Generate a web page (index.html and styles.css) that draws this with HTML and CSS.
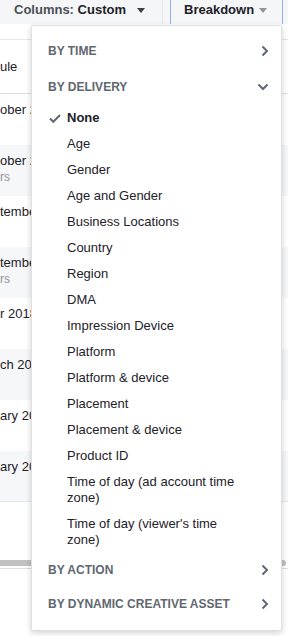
FILE: index.html
```html
<!DOCTYPE html>
<html lang="en">
<head>
    <meta charset="UTF-8">
    <meta name="viewport" content="width=device-width, initial-scale=1.0">
    <title>Breakdown</title>
    <link rel="stylesheet" href="styles.css">
</head>
<body>
    <!-- Barra de herramientas -->
    <div class="toolbar">
        <div class="tb-btn tb-columns">
            <span class="tb-label">Columns:</span>&nbsp;<span class="tb-value">Custom</span>
            <span class="caret"></span>
        </div>
        <div class="tb-sep"></div>
        <div class="tb-btn tb-breakdown">
            <span class="tb-value">Breakdown</span>
            <span class="caret caret-light"></span>
        </div>
    </div>

    <!-- Tabla de anuncios (detrás del menú) -->
    <div class="grid">
        <div class="grid-head">ule</div>
        <div class="grid-row">ober 2018</div>
        <div class="grid-row alt">ober 2018<span class="sub">rs</span></div>
        <div class="grid-row">tember 2018</div>
        <div class="grid-row alt">tember 2018<span class="sub">rs</span></div>
        <div class="grid-row">r 2018</div>
        <div class="grid-row alt">ch 2018</div>
        <div class="grid-row">ary 2018</div>
        <div class="grid-row alt">ary 2018</div>
    </div>
    <div class="scroll"><div class="scroll-thumb"></div></div>

    <!-- Menú desplegable -->
    <div class="menu">
        <div class="menu-head">
            <span>By time</span>
            <svg class="chev" width="8" height="12" viewBox="0 0 8 12"><polyline points="1.5,1.5 6,6 1.5,10.5"/></svg>
        </div>
        <div class="menu-head">
            <span>By delivery</span>
            <svg class="chev" width="12" height="8" viewBox="0 0 12 8"><polyline points="1.5,1.5 6,6 10.5,1.5"/></svg>
        </div>
        <div class="menu-item selected">
            <span class="mark"><svg width="12" height="9" viewBox="0 0 12 9"><polyline points="1,4.5 4.3,7.8 11,1"/></svg></span>
            <span>None</span>
        </div>
        <div class="menu-item"><span class="mark"></span><span>Age</span></div>
        <div class="menu-item"><span class="mark"></span><span>Gender</span></div>
        <div class="menu-item"><span class="mark"></span><span>Age and Gender</span></div>
        <div class="menu-item"><span class="mark"></span><span>Business Locations</span></div>
        <div class="menu-item"><span class="mark"></span><span>Country</span></div>
        <div class="menu-item"><span class="mark"></span><span>Region</span></div>
        <div class="menu-item"><span class="mark"></span><span>DMA</span></div>
        <div class="menu-item"><span class="mark"></span><span>Impression Device</span></div>
        <div class="menu-item"><span class="mark"></span><span>Platform</span></div>
        <div class="menu-item"><span class="mark"></span><span>Platform &amp; device</span></div>
        <div class="menu-item"><span class="mark"></span><span>Placement</span></div>
        <div class="menu-item"><span class="mark"></span><span>Placement &amp; device</span></div>
        <div class="menu-item"><span class="mark"></span><span>Product ID</span></div>
        <div class="menu-item"><span class="mark"></span><span>Time of day (ad account time zone)</span></div>
        <div class="menu-item"><span class="mark"></span><span>Time of day (viewer's time zone)</span></div>
        <div class="menu-head compact">
            <span>By action</span>
            <svg class="chev" width="8" height="12" viewBox="0 0 8 12"><polyline points="1.5,1.5 6,6 1.5,10.5"/></svg>
        </div>
        <div class="menu-head compact">
            <span>By dynamic creative asset</span>
            <svg class="chev" width="8" height="12" viewBox="0 0 8 12"><polyline points="1.5,1.5 6,6 1.5,10.5"/></svg>
        </div>
    </div>
</body>
</html>
```

FILE: styles.css
```css
body {
    font-family: "Liberation Sans", Arial, sans-serif;
    margin: 0;
    width: 288px;
    height: 636px;
    overflow: hidden;
    position: relative;
    background-color: #fff;
    color: #1d2129;
}

/* Barra superior */
.toolbar {
    display: flex;
    height: 24px;
    background-color: #f5f6f7;
    font-size: 13px;
    font-weight: bold;
    line-height: 20px;
}

.tb-btn {
    display: flex;
    align-items: flex-start;
    box-sizing: border-box;
    height: 24px;
}

.tb-columns {
    padding-left: 14px;
    width: 162px;
}

.tb-label {
    color: #4b4f56;
}

.tb-value {
    color: #1d2129;
}

.tb-sep {
    width: 1px;
    height: 24px;
    background-color: #e4e6eb;
}

.tb-breakdown {
    width: 113px;
    margin-left: 7px;
    padding-left: 13px;
    border-left: 1px solid #8db2ef;
    border-right: 1px solid #8db2ef;
}

.caret {
    width: 0;
    height: 0;
    margin: 8px 0 0 11px;
    border-left: 4.5px solid transparent;
    border-right: 4.5px solid transparent;
    border-top: 5px solid #3b3f45;
}

.caret-light {
    margin-left: 5px;
    border-left-width: 4px;
    border-right-width: 4px;
    border-top-color: #90949c;
}

/* Tabla */
.grid {
    margin-top: 15px;
    border-top: 1px solid #e4e6eb;
    font-size: 13px;
    line-height: 16px;
}

.grid-head {
    height: 53px;
    display: flex;
    align-items: center;
    border-bottom: 1px solid #dddfe2;
    white-space: nowrap;
}

.grid-row {
    height: 51px;
    box-sizing: border-box;
    padding-top: 8px;
    white-space: nowrap;
}

.grid-row.alt {
    background-color: #f6f7f9;
}

.grid-row:last-child {
    border-bottom: 1px solid #e4e6eb;
}

.sub {
    display: block;
    font-size: 12px;
    color: #90949c;
}

.scroll {
    margin-top: 58px;
    height: 8px;
    border-bottom: 1px solid #dddfe2;
}

.scroll-thumb {
    width: 286px;
    height: 6px;
    background-color: #c1c1c1;
    border-radius: 0 3px 3px 0;
}

/* Menú desplegable */
.menu {
    position: absolute;
    top: 25px;
    left: 31px;
    width: 251px;
    box-sizing: border-box;
    padding: 7px 0 9px;
    background-color: #fff;
    border: 1px solid rgba(0, 0, 0, 0.12);
    border-radius: 2px;
    box-shadow: 0 2px 6px rgba(0, 0, 0, 0.18);
    font-size: 13px;
    line-height: 16px;
}

.menu-head {
    display: flex;
    justify-content: space-between;
    align-items: center;
    height: 36px;
    padding: 0 12px 0 16px;
    font-size: 12px;
    font-weight: bold;
    text-transform: uppercase;
    color: #606770;
}

.menu-head.compact {
    height: 34px;
}

.chev polyline,
.mark polyline {
    fill: none;
    stroke: #606770;
    stroke-width: 2;
}

.menu-item {
    display: flex;
    align-items: flex-start;
    padding: 5px 32px 5px 17px;
    color: #1d2129;
}

.mark {
    flex: none;
    width: 18px;
    height: 16px;
    display: flex;
    align-items: center;
}

.menu-item.selected {
    font-weight: bold;
}
```
